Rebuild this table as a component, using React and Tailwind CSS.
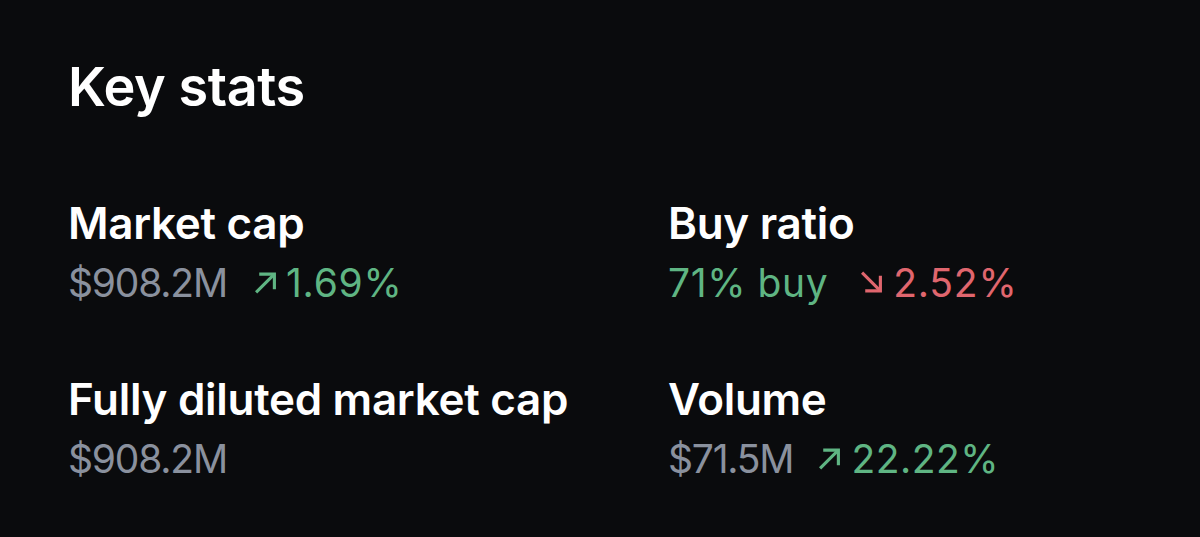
import React from "react";

function ArrowUp({ className }) {
  return (
    <svg viewBox="0 0 22 22" className={className} fill="none" stroke="currentColor" strokeWidth="3" strokeLinecap="butt" strokeLinejoin="miter">
      <path d="M2 20.5 L19 3.5" />
      <path d="M5 3 H19.5 V17.5" />
    </svg>
  );
}
function ArrowDown({ className }) {
  return (
    <svg viewBox="0 0 22 22" className={className} fill="none" stroke="currentColor" strokeWidth="3" strokeLinecap="butt" strokeLinejoin="miter">
      <path d="M2 1.5 L19 18.5" />
      <path d="M5 19 H19.5 V4.5" />
    </svg>
  );
}

function Stat({ label, children }) {
  return (
    <div className="flex flex-col">
      <div className="text-[44px] font-semibold leading-none text-white tracking-[-0.3px] whitespace-nowrap">{label}</div>
      <div className="mt-[18px] flex items-center text-[39px] leading-none whitespace-nowrap">{children}</div>
    </div>
  );
}

export default function App() {
  return (
    <div className="w-[1200px] h-[537px] bg-[#0a0b0d] px-[68px] pt-[60px]" style={{ fontFamily: "Inter, 'Noto Sans', sans-serif" }}>
      <h1 className="text-[54px] font-semibold leading-none text-white tracking-[-0.4px]">Key stats</h1>
      <div className="mt-[87px] grid grid-cols-[600px_1fr] gap-y-[75px]">
        <Stat label="Market cap">
          <span className="text-[#8a919e] tracking-[-1.2px]">$908.2M</span>
          <span className="ml-[27px] flex items-center text-[#5fb583] tracking-[0.8px]">
            <ArrowUp className="w-[23px] h-[23px] shrink-0 mr-[9px]" />1.69%
          </span>
        </Stat>
        <Stat label="Buy ratio">
          <span className="text-[#5fb583] tracking-[0.6px]">71% buy</span>
          <span className="ml-[32px] flex items-center text-[#e0666e] tracking-[0.8px]">
            <ArrowDown className="w-[23px] h-[23px] shrink-0 mr-[10px]" />2.52%
          </span>
        </Stat>
        <Stat label="Fully diluted market cap">
          <span className="text-[#8a919e] tracking-[-1.2px]">$908.2M</span>
        </Stat>
        <Stat label="Volume">
          <span className="text-[#8a919e] tracking-[-1.2px]">$71.5M</span>
          <span className="ml-[25px] flex items-center text-[#5fb583] tracking-[0.5px]">
            <ArrowUp className="w-[23px] h-[23px] shrink-0 mr-[10px]" />22.22%
          </span>
        </Stat>
      </div>
    </div>
  );
}
